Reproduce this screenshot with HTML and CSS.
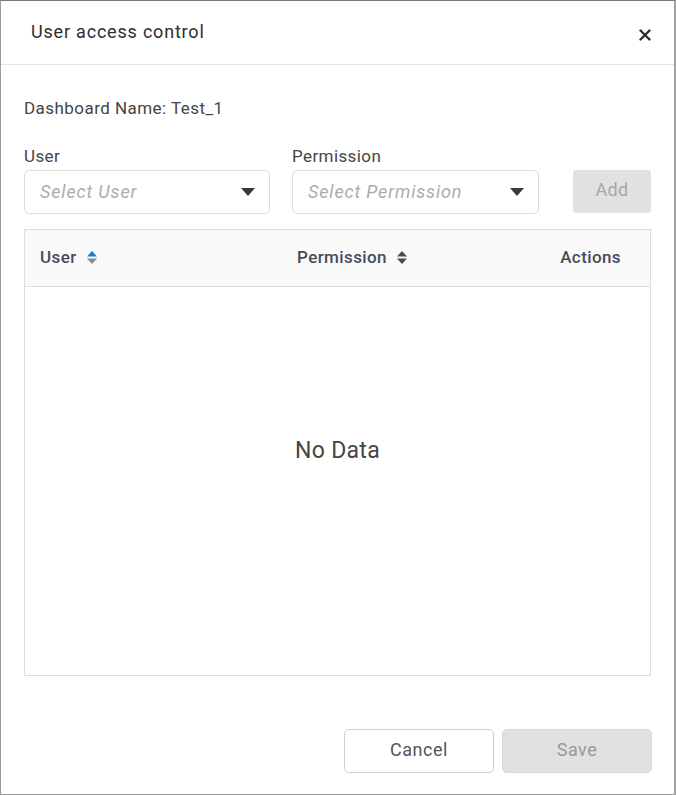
FILE: index.html
```html
<!DOCTYPE html>
<html>
<head>
<meta charset="utf-8">
<link rel="stylesheet" href="styles.css">
</head>
<body>
<div class="dialog">
  <div class="dialog-header">
    <span class="dialog-title">User access control</span>
    <button class="close-btn" aria-label="Close">
      <svg width="12" height="12" viewBox="0 0 12 12"><path d="M1.5 1.5 L10.5 10.5 M10.5 1.5 L1.5 10.5" stroke="#2b2b2b" stroke-width="2.4" stroke-linecap="round"/></svg>
    </button>
  </div>
  <div class="dialog-body">
    <div class="dash-name">Dashboard Name: Test_1</div>
    <div class="form-row">
      <div class="field field-user">
        <label class="field-label">User</label>
        <div class="select">
          <span class="placeholder">Select User</span>
          <svg class="caret" width="14" height="8" viewBox="0 0 14 8"><path d="M0 0 H14 L7 8 Z" fill="#3a3a3a"/></svg>
        </div>
      </div>
      <div class="field field-perm">
        <label class="field-label">Permission</label>
        <div class="select">
          <span class="placeholder">Select Permission</span>
          <svg class="caret" width="14" height="8" viewBox="0 0 14 8"><path d="M0 0 H14 L7 8 Z" fill="#3a3a3a"/></svg>
        </div>
      </div>
      <button class="add-btn">Add</button>
    </div>
    <div class="table">
      <div class="table-head">
        <div class="th th-user">User
          <svg class="sort" width="10" height="13" viewBox="0 0 10 13"><path d="M5 0 L10 5.5 H0 Z" fill="#1b7bd3"/><path d="M0 7.5 H10 L5 13 Z" fill="#8a8a8a"/></svg>
        </div>
        <div class="th th-perm">Permission
          <svg class="sort" width="10" height="13" viewBox="0 0 10 13"><path d="M5 0 L10 5.5 H0 Z" fill="#474b59"/><path d="M0 7.5 H10 L5 13 Z" fill="#474b59"/></svg>
        </div>
        <div class="th th-actions">Actions</div>
      </div>
      <div class="table-empty">No Data</div>
    </div>
  </div>
  <div class="dialog-footer">
    <button class="btn btn-cancel">Cancel</button>
    <button class="btn btn-save">Save</button>
  </div>
</div>
</body>
</html>
```
FILE: styles.css
```css
html, body {
  margin: 0;
  padding: 0;
  background: #ffffff;
}
body {
  font-family: Roboto, "Liberation Sans", sans-serif;
  color: #444;
}
.dialog {
  width: 676px;
  height: 795px;
  box-sizing: border-box;
  border: 1px solid #9c9c9c;
  border-top-color: #777;
  border-right: 2px solid #a0a0a0;
  background: #fff;
  display: flex;
  flex-direction: column;
}
.dialog-header {
  height: 64px;
  border-bottom: 1px solid #e4e4e4;
  display: flex;
  align-items: center;
  padding: 0 22px 0 30px;
  justify-content: space-between;
  box-sizing: border-box;
  flex: none;
}
.dialog-title {
  font-size: 18px;
  color: #2e2e2e;
  letter-spacing: 0.8px;
  margin-top: -2px;
}
.close-btn {
  border: none;
  background: none;
  padding: 0;
  width: 14px;
  height: 14px;
  display: flex;
  align-items: center;
  justify-content: center;
  margin-top: 4px;
}
.dialog-body {
  padding: 0 23px 0 23px;
  flex: none;
}
.dash-name {
  font-size: 17px;
  letter-spacing: 0.45px;
  line-height: 20px;
  margin-top: 33px;
  color: #454545;
}
.form-row {
  display: flex;
  align-items: flex-end;
  margin-top: 28px;
}
.field {
  display: flex;
  flex-direction: column;
}
.field-user { width: 246px; }
.field-perm { width: 247px; margin-left: 22px; }
.field-label {
  font-size: 17px;
  letter-spacing: 0.4px;
  line-height: 20px;
  color: #454545;
  margin-bottom: 4px;
}
.select {
  height: 44px;
  box-sizing: border-box;
  border: 1px solid #dcdcdc;
  border-radius: 5px;
  display: flex;
  align-items: center;
  justify-content: space-between;
  padding: 0 14px 0 15px;
}
.placeholder {
  font-size: 18px;
  font-style: italic;
  color: #acacac;
  letter-spacing: 0.85px;
  margin-top: -2px;
}
.caret { display: block; }
.add-btn {
  margin-left: auto;
  width: 78px;
  height: 43px;
  margin-bottom: 1px;
  border: none;
  border-radius: 3px;
  background: #e1e1e1;
  color: #a7a7a7;
  font-family: Roboto, "Liberation Sans", sans-serif;
  font-size: 18px;
  letter-spacing: 0.3px;
  padding: 0 0 4px 0;
}
.table {
  margin-top: 15px;
  height: 447px;
  box-sizing: border-box;
  border: 1px solid #dedede;
  display: flex;
  flex-direction: column;
}
.table-head {
  height: 57px;
  box-sizing: border-box;
  background: #f9f9f9;
  border-bottom: 1px solid #dedede;
  display: flex;
  align-items: center;
  font-size: 17px;
  letter-spacing: 0.4px;
  font-weight: 500;
  color: #474b59;
  flex: none;
  padding-bottom: 2px;
}
.th {
  display: flex;
  align-items: center;
}
.th .sort { margin-left: 10px; }
.th-user { padding-left: 15px; width: 257px; }
.th-actions { margin-left: auto; padding-right: 29px; }
.table-empty {
  flex: 1;
  display: flex;
  align-items: center;
  justify-content: center;
  font-size: 23px;
  letter-spacing: 0.3px;
  color: #454545;
  padding-bottom: 62px;
}
.dialog-footer {
  display: flex;
  justify-content: flex-end;
  gap: 8px;
  padding: 53px 22px 0 0;
}
.btn {
  width: 150px;
  height: 44px;
  border-radius: 5px;
  font-family: Roboto, "Liberation Sans", sans-serif;
  font-size: 18px;
  letter-spacing: 0.5px;
  box-sizing: border-box;
  padding: 0 0 4px 0;
}
.btn-cancel {
  background: #fff;
  border: 1px solid #cfcfcf;
  color: #555;
}
.btn-save {
  background: #e1e1e1;
  border: 1px solid #d8d8d8;
  color: #999;
}
```
